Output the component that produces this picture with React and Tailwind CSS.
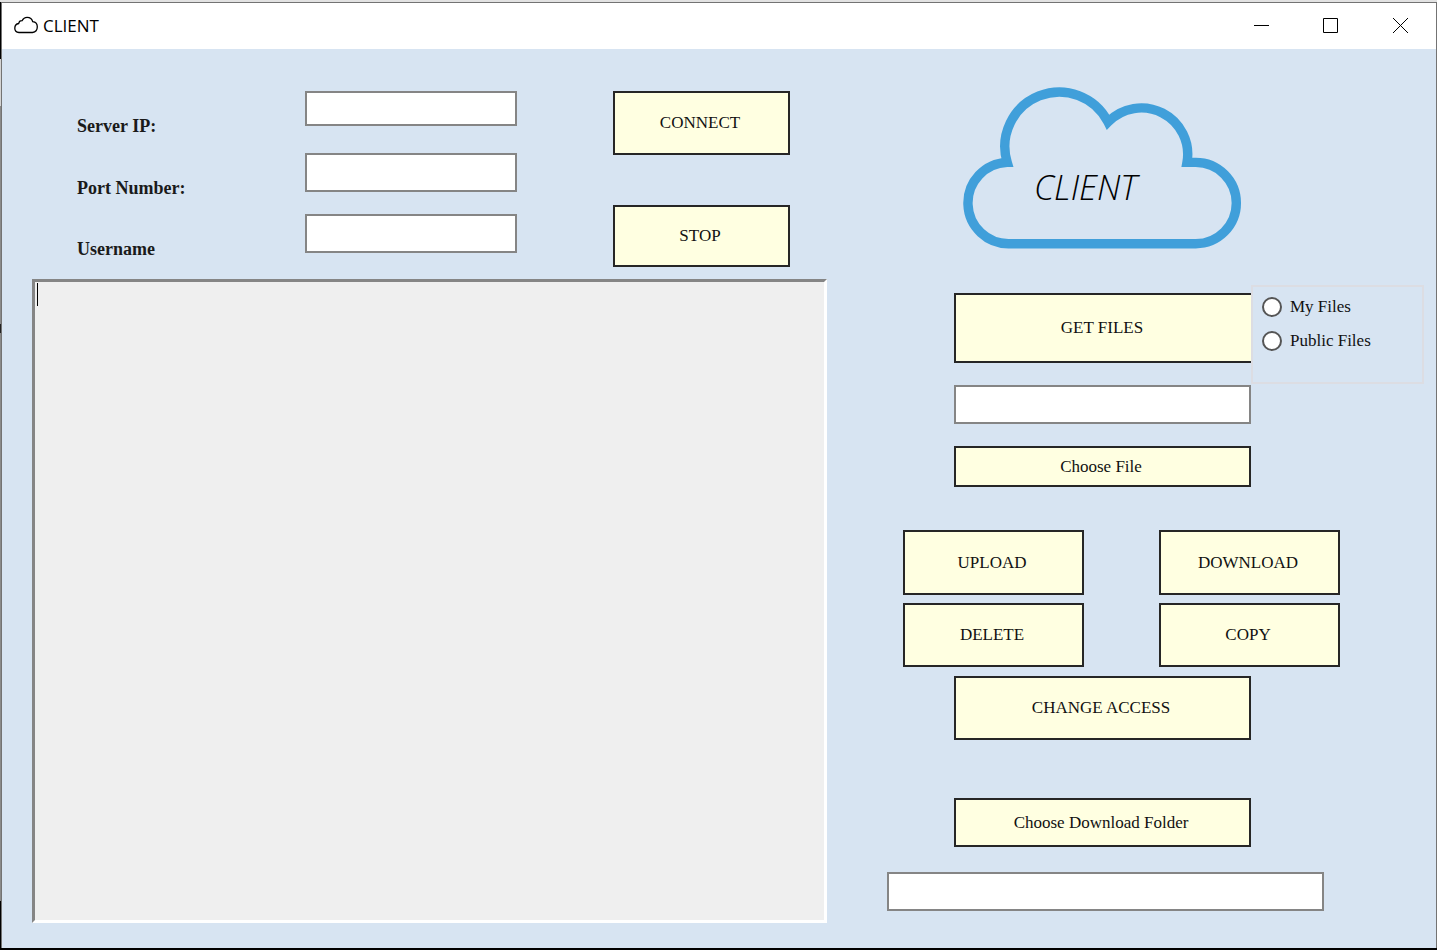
import React from "react";

const buttonBase =
  "flex items-center justify-center border-2 border-[#262626] bg-[#ffffe1] pr-[3px] text-[17px] leading-5 text-[#111]";
const fieldBase =
  "block border-2 border-[#858585] bg-white px-2 text-[17px] outline-none";

function TitleBar() {
  return (
    <header className="flex h-[46px] items-center bg-white pl-3">
      <svg className="h-6 w-6" viewBox="0 0 24 24" fill="none" stroke="#000" strokeWidth="1.3" aria-hidden="true">
        <path d="M5 18.500C2.500 18.300 .8 16.600 .8 14.200C.8 11.700 2.300 9.900 4.700 9.500C5 7.600 6.300 6.500 8.200 6.600C9.200 4.400 11 3.300 13.100 3.300C16 3.300 18.100 5 18.700 7.700C21.400 8 23.300 10 23.300 12.800C23.300 16 21.400 18.200 18.500 18.500Z" />
      </svg>
      <h1 className="pl-[5px] font-['Open_Sans',sans-serif] text-[17px] leading-6 text-black">CLIENT</h1>
      <div className="ml-auto flex h-full pb-px">
        <button type="button" aria-label="Minimize" className="flex w-[69px] items-center justify-center">
          <svg width="15" height="15" viewBox="0 0 15 15" stroke="#000" aria-hidden="true">
            <path d="M0 7.500H15" />
          </svg>
        </button>
        <button type="button" aria-label="Maximize" className="flex w-[69px] items-center justify-center">
          <svg width="15" height="15" viewBox="0 0 15 15" fill="none" stroke="#000" aria-hidden="true">
            <path d="M.5 .5H14.500V14.500H.5Z" />
          </svg>
        </button>
        <button type="button" aria-label="Close" className="flex w-[71px] items-center justify-center">
          <svg width="15" height="15" viewBox="0 0 15 15" stroke="#000" aria-hidden="true">
            <path d="M0 0L15 15M15 0L0 15" />
          </svg>
        </button>
      </div>
    </header>
  );
}

function ConnectionForm() {
  return (
    <form className="flex pl-[45px]" onSubmit={(e) => e.preventDefault()}>
      <div className="grid grid-cols-[228px_212px] text-[18px] leading-5 font-bold text-[#1a1a1a]">
        <label htmlFor="ip" className="h-[62px] pt-[25px]">Server IP:</label>
        <input id="ip" type="text" className={`${fieldBase} h-[35px]`} />
        <label htmlFor="port" className="h-[61px] pt-[25px]">Port Number:</label>
        <input id="port" type="text" className={`${fieldBase} h-[39px]`} />
        <label htmlFor="user" className="h-[65px] pt-[25px]">Username</label>
        <input id="user" type="text" className={`${fieldBase} h-[39px]`} />
      </div>
      <div className="ml-24 flex w-[177px] flex-col gap-[50px]">
        <button type="submit" className={`${buttonBase} h-16`}>CONNECT</button>
        <button type="button" className={`${buttonBase} h-[62px]`}>STOP</button>
      </div>
    </form>
  );
}

function CloudLogo() {
  return (
    <svg className="ml-[53px] block" width="320" height="190" viewBox="0 0 320 190" role="img" aria-label="Client cloud">
      <path
        d="M70 173.700A40.600 40.600 0 0 1 67.200 92.400A54.500 54.500 0 0 1 168 52A46.400 46.400 0 0 1 247 92.400H255.700A40.600 40.600 0 0 1 255.700 173.700Z"
        fill="none"
        stroke="#409fda"
        strokeWidth="9.4"
        strokeMiterlimit="10"
      />
      <text x="94" y="130" fontFamily="Open Sans, sans-serif" fontSize="34" fontWeight="300" fontStyle="italic" fill="#000">
        CLIENT
      </text>
    </svg>
  );
}

function FileScope() {
  return (
    <fieldset className="flex h-[99px] flex-1 flex-col gap-[14px] border-2 border-[#dcdde3] pt-[10px] pl-[9px] text-[17px] leading-5 text-[#111]">
      <label className="flex items-center gap-2">
        <input type="radio" name="scope" className="h-5 w-5 appearance-none rounded-full border-2 border-[#555] bg-white checked:bg-[#333]" />
        My Files
      </label>
      <label className="flex items-center gap-2">
        <input type="radio" name="scope" className="h-5 w-5 appearance-none rounded-full border-2 border-[#555] bg-white checked:bg-[#333]" />
        Public Files
      </label>
    </fieldset>
  );
}

function FilePanel() {
  return (
    <section className="w-[537px] shrink-0 pt-[21px]">
      <CloudLogo />
      <div className="mt-[25px] flex pl-[67px]">
        <button type="button" className={`${buttonBase} mt-2 h-[70px] w-[297px] border-r-0`}>GET FILES</button>
        <FileScope />
      </div>
      <div className="mt-px ml-[67px] flex w-[297px] flex-col">
        <input type="text" aria-label="File name" className={`${fieldBase} h-[39px]`} />
        <button type="button" className={`${buttonBase} mt-[22px] h-[41px]`}>Choose File</button>
      </div>
      <div className="mt-[43px] ml-4 grid w-[437px] grid-cols-[181px_181px] justify-between gap-y-2">
        <button type="button" className={`${buttonBase} h-[65px]`}>UPLOAD</button>
        <button type="button" className={`${buttonBase} h-[65px]`}>DOWNLOAD</button>
        <button type="button" className={`${buttonBase} h-16`}>DELETE</button>
        <button type="button" className={`${buttonBase} h-16`}>COPY</button>
      </div>
      <div className="mt-[9px] ml-[67px] flex w-[297px] flex-col gap-[58px]">
        <button type="button" className={`${buttonBase} h-16`}>CHANGE ACCESS</button>
        <button type="button" className={`${buttonBase} h-[49px]`}>Choose Download Folder</button>
      </div>
      <input type="text" aria-label="Download folder" className={`${fieldBase} mt-[25px] h-[39px] w-[437px]`} />
    </section>
  );
}

export default function App() {
  return (
    <div className="flex min-h-screen border-t-2 border-b-2 border-t-[#e2e2e2] border-b-black bg-[#d7e4f2] font-['Liberation_Serif',serif]">
      <div className="w-px bg-[linear-gradient(#000_0_6%,#d4d4d4_6%_11%,#8a8a8a_11%_34%,#222_34%_35%,#8a8a8a_35%_95%,#000_95%)]" />
      <div className="flex min-w-0 flex-1 flex-col border-x border-t border-[#737373]">
        <TitleBar />
        <main className="flex flex-1 gap-[60px] pr-3 pl-[30px]">
          <section className="flex min-w-0 flex-1 flex-col pt-[42px] pb-[25px]">
            <ConnectionForm />
            <div className="relative flex flex-1">
              <textarea
                aria-label="Log"
                className="block w-full resize-none border-[3px] border-t-[#858585] border-r-white border-b-white border-l-[#858585] bg-[#efefef] px-[2px] py-0 text-xl caret-transparent outline-none"
              />
              <span className="absolute top-1 left-[5px] h-[23px] w-px bg-black" aria-hidden="true" />
            </div>
          </section>
          <FilePanel />
        </main>
      </div>
    </div>
  );
}
